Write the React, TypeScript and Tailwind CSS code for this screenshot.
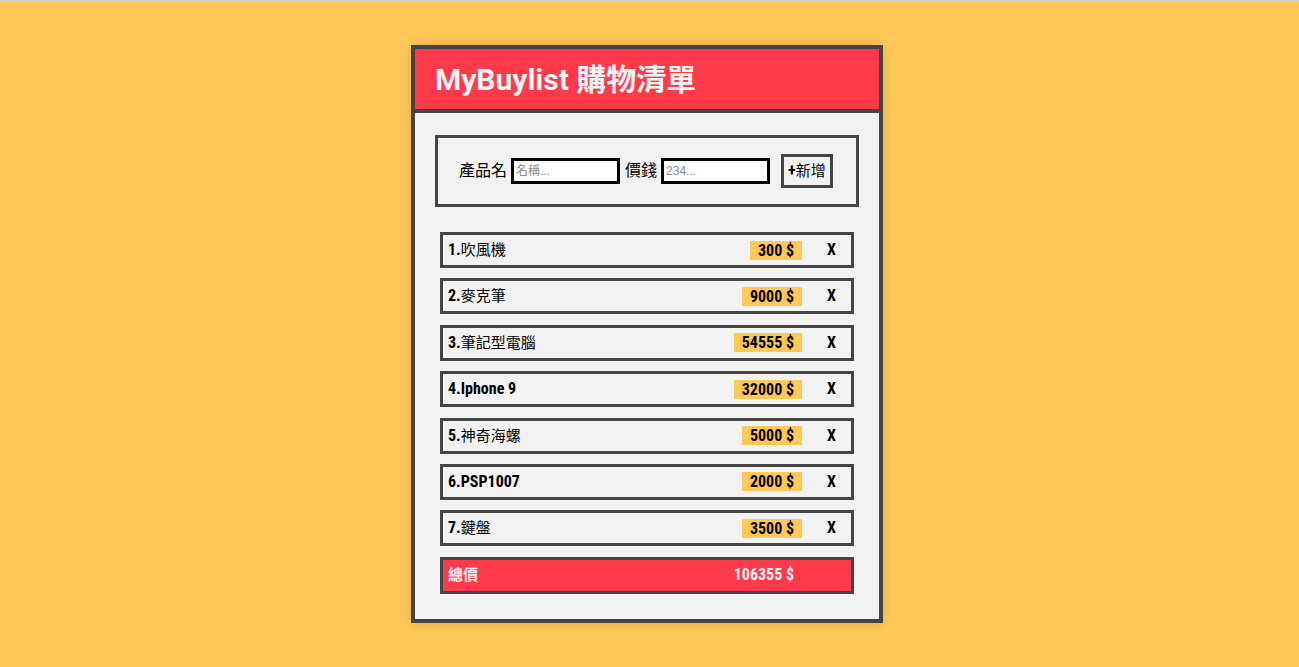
import React, { useState } from "react";

interface Item {
  name: string;
  price: number;
}

const initialItems: Item[] = [
  { name: "吹風機", price: 300 },
  { name: "麥克筆", price: 9000 },
  { name: "筆記型電腦", price: 54555 },
  { name: "Iphone 9", price: 32000 },
  { name: "神奇海螺", price: 5000 },
  { name: "PSP1007", price: 2000 },
  { name: "鍵盤", price: 3500 },
];

const font =
  "font-['Roboto_Condensed','Liberation_Sans_Narrow','DejaVu_Sans','Noto_Sans_CJK_TC',sans-serif] font-stretch-condensed";

// 中文字用一般粗細，英數字用粗體
function Mixed({ text }: { text: string }) {
  const parts = text.split(/([\u3400-\u9fff]+)/).filter(Boolean);
  return (
    <>
      {parts.map((p, i) =>
        /[\u3400-\u9fff]/.test(p) ? (
          <span key={i} className="font-normal text-[15px]">
            {p}
          </span>
        ) : (
          <span key={i}>{p}</span>
        )
      )}
    </>
  );
}

export default function App() {
  const [items, setItems] = useState<Item[]>(initialItems);
  const [name, setName] = useState("");
  const [price, setPrice] = useState("");

  const total = items.reduce((sum, it) => sum + it.price, 0);

  const addItem = () => {
    if (!name || !price) return;
    setItems([...items, { name, price: Number(price) }]);
    setName("");
    setPrice("");
  };

  return (
    <div className={`min-h-[667px] bg-[#ffc857] border-t border-[#c8c8c8] pt-[44px] ${font}`}>
      <div className="ml-[calc(50%-238.5px)] w-[472px] border-4 border-[#444] bg-[#f2f2f2] shadow-[0_0_10px_rgba(0,0,0,0.15)]">
        {/* 標題 */}
        <div className="bg-[#ff3a4a] border-b-4 border-[#444] h-[64px] flex items-center px-[20px]">
          <h1 className="text-[30px] font-bold text-[#f4f4f4] font-['Roboto','Noto_Sans_CJK_TC',sans-serif] font-stretch-normal">
            MyBuylist 購物清單
          </h1>
        </div>

        <div className="px-[20px] pt-[22px] pb-[25px]">
          {/* 新增表單 */}
          <div className="border-[3px] border-[#444] h-[72px] flex items-center pl-[21px] gap-[4px] text-[16px] text-black">
            <span>產品名</span>
            <input
              value={name}
              onChange={(e) => setName(e.target.value)}
              placeholder="名稱..."
              className="w-[109px] h-[26px] border-[3px] border-black bg-white px-[2px] text-[12px] font-['Liberation_Sans','Noto_Sans_CJK_TC',sans-serif] placeholder:text-[#888] outline-none"
            />
            <span className="ml-[1px]">價錢</span>
            <input
              value={price}
              onChange={(e) => setPrice(e.target.value)}
              placeholder="234..."
              className="w-[109px] h-[26px] border-[3px] border-black bg-white px-[2px] text-[12px] font-['Liberation_Sans','Noto_Sans_CJK_TC',sans-serif] placeholder:text-[#888] outline-none"
            />
            <button
              onClick={addItem}
              className="ml-[7px] h-[34px] px-[4px] border-[3px] border-[#444] text-[16px] font-bold"
            >
              <Mixed text="+新增" />
            </button>
          </div>

          {/* 清單 */}
          <div className="mt-[25px] mx-[5px] flex flex-col gap-[10.4px]">
            {items.map((it, i) => (
              <div
                key={i}
                className="h-[36px] border-[3px] border-[#444] flex items-center pl-[5px] text-[16px] font-bold text-black"
              >
                <span className="flex-1">
                  <Mixed text={`${i + 1}.${it.name}`} />
                </span>
                <span className="bg-[#ffc857] h-[19px] leading-[19px] pl-[8px] pr-[8px]">
                  {it.price} $
                </span>
                <button
                  onClick={() => setItems(items.filter((_, j) => j !== i))}
                  className="w-[49px] pl-[25px] text-left font-bold"
                >
                  X
                </button>
              </div>
            ))}

            <div className="h-[37px] border-[3px] border-[#444] bg-[#ff3a4a] flex items-center pl-[5px] text-[16px] font-bold text-[#f4f4f4]">
              <span className="flex-1 text-[15px]">總價</span>
              <span className="pr-[57px]">{total} $</span>
            </div>
          </div>
        </div>
      </div>
    </div>
  );
}
